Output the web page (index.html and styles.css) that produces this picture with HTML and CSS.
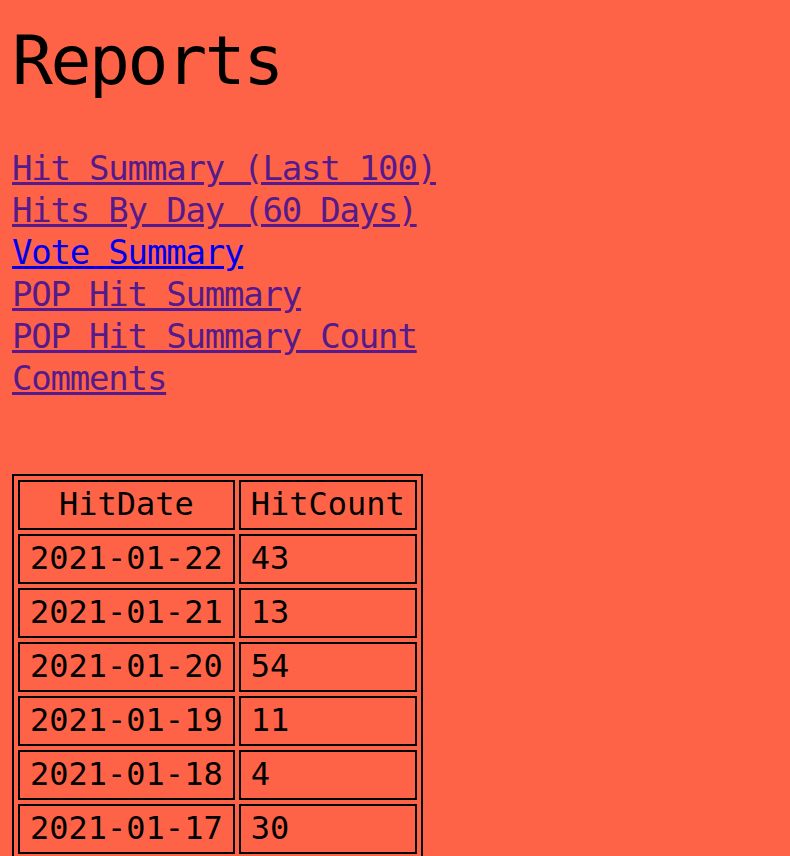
FILE: index.html
```html
<!DOCTYPE html>
<html>
<head>
<meta charset="utf-8">
<title>Reports</title>
<link rel="stylesheet" href="styles.css">
</head>
<body>
<div class="page">
  <h1 class="title">Reports</h1>
  <nav class="links">
    <a class="link visited" href="#hits">Hit Summary (Last 100)</a>
    <a class="link visited" href="#days">Hits By Day (60 Days)</a>
    <a class="link fresh" href="#votes">Vote Summary</a>
    <a class="link visited" href="#pop">POP Hit Summary</a>
    <a class="link visited" href="#popcount">POP Hit Summary Count</a>
    <a class="link visited" href="#comments">Comments</a>
  </nav>
  <table class="report">
    <tr><th class="cell">HitDate</th><th class="cell">HitCount</th></tr>
    <tr><td class="cell">2021-01-22</td><td class="cell">43</td></tr>
    <tr><td class="cell">2021-01-21</td><td class="cell">13</td></tr>
    <tr><td class="cell">2021-01-20</td><td class="cell">54</td></tr>
    <tr><td class="cell">2021-01-19</td><td class="cell">11</td></tr>
    <tr><td class="cell">2021-01-18</td><td class="cell">4</td></tr>
    <tr><td class="cell">2021-01-17</td><td class="cell">30</td></tr>
  </table>
</div>
</body>
</html>
```

FILE: styles.css
```css
html, body {
  margin: 0;
  padding: 0;
  background: #ff6347;
}
body {
  font-family: "DejaVu Sans Mono", monospace;
  color: #000;
}
.page {
  padding: 0 12px;
}
.title {
  margin: 29px 0 0;
  font-size: 68px;
  letter-spacing: -2.4px;
  line-height: 64px;
  font-weight: normal;
}
.links {
  margin-top: 54px;
  display: flex;
  flex-direction: column;
  align-items: flex-start;
  font-size: 34px;
  letter-spacing: -1.2px;
  line-height: 42px;
}
.link.visited { color: #551a8b; }
.link.fresh { color: #0000ee; }
.report {
  margin-top: 75px;
  border: 2px solid #000;
  border-spacing: 4px;
  font-size: 32px;
  line-height: 42px;
}
.cell {
  border: 2px solid #000;
  padding: 1px 10px 3px 10px;
  font-weight: normal;
  text-align: left;
}
th.cell {
  text-align: center;
}
```
